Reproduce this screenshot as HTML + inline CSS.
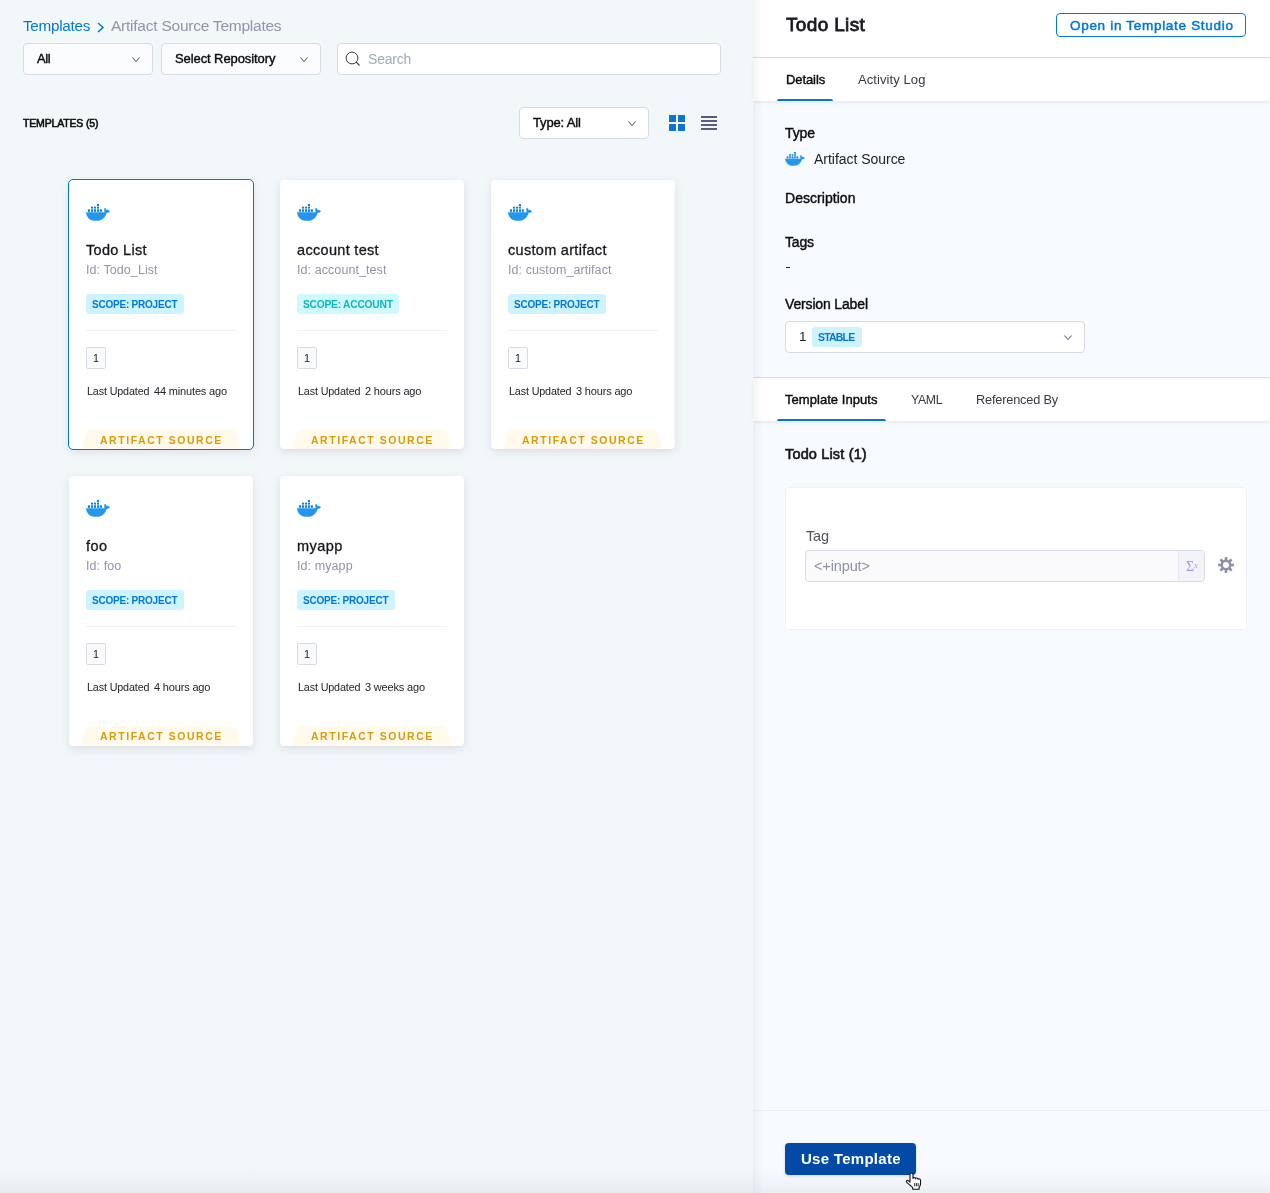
<!DOCTYPE html>
<html><head><meta charset="utf-8"><style>
*{box-sizing:border-box;margin:0;padding:0}
html,body{width:1270px;height:1193px;overflow:hidden}
body{font-family:"Liberation Sans",sans-serif;background:#F2F7FA;position:relative}
.abs{position:absolute}
.tx{position:absolute;white-space:nowrap;line-height:1;will-change:transform}
.box{position:absolute;border:1px solid #D9DAE5;border-radius:4px}
.card{position:absolute;width:184px;height:269px;background:#fff;border-radius:4px;box-shadow:0 0 1px rgba(40,41,61,.08),0 3px 8px rgba(96,97,112,.15)}
.card .clip{position:absolute;left:0;top:0;width:184px;height:100%;border-radius:4px;overflow:hidden}
.sel:after{content:"";position:absolute;left:-1px;top:-1px;right:-1px;bottom:-1px;border:1px solid #0278D5;border-radius:5px}
.tabs{position:absolute;left:0;width:517px;background:#fff;box-shadow:0 2px 3px rgba(40,41,61,.07)}
.uline{position:absolute;height:2px;background:#0278D5;border-radius:2px 2px 0 0}
</style></head>
<body>
<div class="abs" style="left:0;top:0;width:753px;height:1193px">
<div class="tx" style="left:23.30px;top:17.99px;font-size:15.25px;color:#0278D5;letter-spacing:-0.262px;">Templates</div>
<svg class="abs" style="left:96px;top:22px" width="10" height="11" viewBox="0 0 10 11"><path d="M2 1 L7 5.5 L2 10" fill="none" stroke="#0278D5" stroke-width="1.5"/></svg>
<div class="tx" style="left:110.80px;top:17.78px;font-size:15.5px;color:#9293AB;letter-spacing:-0.238px;">Artifact Source Templates</div>
<div class="box" style="left:23px;top:43px;width:130px;height:32px;background:#FBFCFE"></div>
<div class="tx" style="left:36.50px;top:51.99px;font-size:13.0px;color:#0B0B0D;-webkit-text-stroke:0.4px #0B0B0D;letter-spacing:-0.425px;">All</div>
<svg class="abs" style="left:130.6px;top:55.7px" width="10" height="7" viewBox="-1 -1 10 7"><path d="M0.5 0.5 L4.0 4.5 L7.5 0.5" fill="none" stroke="#6B6D85" stroke-width="1.1"/></svg>
<div class="box" style="left:161px;top:43px;width:160px;height:32px;background:#FBFCFE"></div>
<div class="tx" style="left:174.50px;top:51.99px;font-size:13.0px;color:#0B0B0D;-webkit-text-stroke:0.4px #0B0B0D;letter-spacing:-0.094px;">Select Repository</div>
<svg class="abs" style="left:299px;top:55.7px" width="10" height="7" viewBox="-1 -1 10 7"><path d="M0.5 0.5 L4.0 4.5 L7.5 0.5" fill="none" stroke="#6B6D85" stroke-width="1.1"/></svg>
<div class="box" style="left:337px;top:43px;width:384px;height:32px;background:#fff"></div>
<svg class="abs" style="left:345px;top:51px" width="16" height="16" viewBox="0 0 16 16"><circle cx="7" cy="7" r="5.9" fill="none" stroke="#383946" stroke-width="1"/><path d="M11.2 11.2 L14.5 14.5" stroke="#383946" stroke-width="1.1"/></svg>
<div class="tx" style="left:367.80px;top:52.15px;font-size:14.0px;color:#A0A9B8;letter-spacing:-0.190px;">Search</div>
<div class="tx" style="left:23.30px;top:118.31px;font-size:10.5px;color:#0B0B0D;-webkit-text-stroke:0.55px #0B0B0D;letter-spacing:-0.167px;">TEMPLATES (5)</div>
<div class="box" style="left:519px;top:107px;width:130px;height:32px;background:#fff"></div>
<div class="tx" style="left:533.00px;top:115.89px;font-size:13.0px;color:#0B0B0D;-webkit-text-stroke:0.4px #0B0B0D;letter-spacing:-0.156px;">Type: All</div>
<svg class="abs" style="left:627.1px;top:119.7px" width="10" height="7" viewBox="-1 -1 10 7"><path d="M0.5 0.5 L4.0 4.5 L7.5 0.5" fill="none" stroke="#6B6D85" stroke-width="1.1"/></svg>
<svg class="abs" style="left:668px;top:114px" width="18" height="18" viewBox="0 0 18 18" fill="#0F73D0">
<rect x="1" y="1" width="7" height="7"/><rect x="10" y="1" width="7" height="7"/><rect x="1" y="10" width="7" height="7"/><rect x="10" y="10" width="7" height="7"/></svg>
<svg class="abs" style="left:700px;top:114px" width="18" height="18" viewBox="0 0 18 18" fill="#5B5C76">
<rect x="1" y="2" width="16" height="2"/><rect x="1" y="6" width="16" height="2"/><rect x="1" y="10" width="16" height="2"/><rect x="1" y="14" width="16" height="2"/></svg>
<div class="card sel" style="left:69px;top:180px;height:269px"><div class="clip">
<svg class="abs" style="left:17px;top:24px" width="24" height="17" viewBox="0 0 24 17"><path fill="#2496ED" d="M0 8.3 L17.9 8.3 C18.6 8.1 18.6 7.3 18.3 6.4 C18.1 5.4 18.4 3.9 19 3.7 C19.7 3.9 20 4.7 20.2 5.7 C21.2 5.5 23.1 5.9 23.9 7.2 C23.4 8.3 22 8.9 20.6 8.9 C19.4 13.2 15.9 16.8 11.2 16.8 L8.2 16.8 C3.8 16.5 0.4 13 0 8.3 Z"/><g fill="#0A7FE3"><rect x="1.9" y="5.3" width="2.1" height="2.5"/><rect x="4.9" y="5.3" width="2.1" height="2.5"/><rect x="7.9" y="5.3" width="2.1" height="2.5"/><rect x="10.9" y="5.3" width="2.1" height="2.5"/><rect x="13.8" y="5.3" width="2.1" height="2.5"/><rect x="4.9" y="2.7" width="2.1" height="1.9"/><rect x="7.9" y="2.7" width="2.1" height="1.9"/><rect x="10.9" y="2.7" width="2.1" height="1.9"/><rect x="10.9" y="0" width="2.1" height="2.1"/></g></svg>
<div class="tx" style="left:17.00px;top:62.92px;font-size:14.5px;color:#16161C;-webkit-text-stroke:0.3px #16161C;letter-spacing:0.319px;">Todo List</div>
<div class="tx" style="left:17.00px;top:84.42px;font-size:12.5px;color:#9293AB;letter-spacing:0.076px;">Id: Todo_List</div>
<div class="abs" style="left:17px;top:114px;width:98px;height:19.5px;border-radius:3px;background:#CDF4FE"></div>
<div class="tx" style="left:23.30px;top:119.83px;font-size:10.0px;color:#0278D5;font-weight:bold;letter-spacing:-0.219px;">SCOPE: PROJECT</div>
<div class="abs" style="left:17px;top:150px;width:150px;height:1px;background:#EFEFF5"></div>
<div class="abs" style="left:17px;top:167px;width:20px;height:22px;border:1px solid #D9DAE5;border-radius:2px;background:#FAFBFD"></div>
<div class="tx" style="left:24.00px;top:172.70px;font-size:10.75px;color:#22222A;">1</div>
<div class="tx" style="left:17.50px;top:206.30px;font-size:10.75px;color:#22222A;letter-spacing:-0.132px;">Last Updated</div>
<div class="tx" style="left:85.10px;top:206.09px;font-size:11.0px;color:#22222A;letter-spacing:-0.162px;">44 minutes ago</div>
<svg class="abs" style="left:12px;top:249px" width="160" height="21" viewBox="0 0 160 21"><path d="M0 21 L4.3 5 Q5.6 0.3 10.5 0.3 L149.5 0.3 Q154.4 0.3 155.7 5 L160 21 Z" fill="#FFFAEC"/></svg>
<div class="tx" style="left:30.70px;top:254.91px;font-size:10.5px;color:#D99B0A;font-weight:bold;letter-spacing:1.539px;">ARTIFACT SOURCE</div>
</div></div>
<div class="card" style="left:280px;top:180px;height:269px"><div class="clip">
<svg class="abs" style="left:17px;top:24px" width="24" height="17" viewBox="0 0 24 17"><path fill="#2496ED" d="M0 8.3 L17.9 8.3 C18.6 8.1 18.6 7.3 18.3 6.4 C18.1 5.4 18.4 3.9 19 3.7 C19.7 3.9 20 4.7 20.2 5.7 C21.2 5.5 23.1 5.9 23.9 7.2 C23.4 8.3 22 8.9 20.6 8.9 C19.4 13.2 15.9 16.8 11.2 16.8 L8.2 16.8 C3.8 16.5 0.4 13 0 8.3 Z"/><g fill="#0A7FE3"><rect x="1.9" y="5.3" width="2.1" height="2.5"/><rect x="4.9" y="5.3" width="2.1" height="2.5"/><rect x="7.9" y="5.3" width="2.1" height="2.5"/><rect x="10.9" y="5.3" width="2.1" height="2.5"/><rect x="13.8" y="5.3" width="2.1" height="2.5"/><rect x="4.9" y="2.7" width="2.1" height="1.9"/><rect x="7.9" y="2.7" width="2.1" height="1.9"/><rect x="10.9" y="2.7" width="2.1" height="1.9"/><rect x="10.9" y="0" width="2.1" height="2.1"/></g></svg>
<div class="tx" style="left:17.00px;top:62.92px;font-size:14.5px;color:#16161C;-webkit-text-stroke:0.3px #16161C;letter-spacing:0.312px;">account test</div>
<div class="tx" style="left:17.00px;top:84.42px;font-size:12.5px;color:#9293AB;letter-spacing:0.076px;">Id: account_test</div>
<div class="abs" style="left:17px;top:114px;width:102px;height:19.5px;border-radius:3px;background:#CFF9FA"></div>
<div class="tx" style="left:23.10px;top:119.62px;font-size:10.25px;color:#0BB5C1;font-weight:bold;letter-spacing:-0.238px;">SCOPE: ACCOUNT</div>
<div class="abs" style="left:17px;top:150px;width:150px;height:1px;background:#EFEFF5"></div>
<div class="abs" style="left:17px;top:167px;width:20px;height:22px;border:1px solid #D9DAE5;border-radius:2px;background:#FAFBFD"></div>
<div class="tx" style="left:24.00px;top:172.70px;font-size:10.75px;color:#22222A;">1</div>
<div class="tx" style="left:17.50px;top:206.30px;font-size:10.75px;color:#22222A;letter-spacing:-0.132px;">Last Updated</div>
<div class="tx" style="left:85.10px;top:206.09px;font-size:11.0px;color:#22222A;letter-spacing:-0.167px;">2 hours ago</div>
<svg class="abs" style="left:12px;top:249px" width="160" height="21" viewBox="0 0 160 21"><path d="M0 21 L4.3 5 Q5.6 0.3 10.5 0.3 L149.5 0.3 Q154.4 0.3 155.7 5 L160 21 Z" fill="#FFFAEC"/></svg>
<div class="tx" style="left:30.70px;top:254.91px;font-size:10.5px;color:#D99B0A;font-weight:bold;letter-spacing:1.539px;">ARTIFACT SOURCE</div>
</div></div>
<div class="card" style="left:491px;top:180px;height:269px"><div class="clip">
<svg class="abs" style="left:17px;top:24px" width="24" height="17" viewBox="0 0 24 17"><path fill="#2496ED" d="M0 8.3 L17.9 8.3 C18.6 8.1 18.6 7.3 18.3 6.4 C18.1 5.4 18.4 3.9 19 3.7 C19.7 3.9 20 4.7 20.2 5.7 C21.2 5.5 23.1 5.9 23.9 7.2 C23.4 8.3 22 8.9 20.6 8.9 C19.4 13.2 15.9 16.8 11.2 16.8 L8.2 16.8 C3.8 16.5 0.4 13 0 8.3 Z"/><g fill="#0A7FE3"><rect x="1.9" y="5.3" width="2.1" height="2.5"/><rect x="4.9" y="5.3" width="2.1" height="2.5"/><rect x="7.9" y="5.3" width="2.1" height="2.5"/><rect x="10.9" y="5.3" width="2.1" height="2.5"/><rect x="13.8" y="5.3" width="2.1" height="2.5"/><rect x="4.9" y="2.7" width="2.1" height="1.9"/><rect x="7.9" y="2.7" width="2.1" height="1.9"/><rect x="10.9" y="2.7" width="2.1" height="1.9"/><rect x="10.9" y="0" width="2.1" height="2.1"/></g></svg>
<div class="tx" style="left:17.00px;top:62.92px;font-size:14.5px;color:#16161C;-webkit-text-stroke:0.3px #16161C;letter-spacing:0.296px;">custom artifact</div>
<div class="tx" style="left:17.00px;top:84.42px;font-size:12.5px;color:#9293AB;letter-spacing:0.073px;">Id: custom_artifact</div>
<div class="abs" style="left:17px;top:114px;width:98px;height:19.5px;border-radius:3px;background:#CDF4FE"></div>
<div class="tx" style="left:23.30px;top:119.83px;font-size:10.0px;color:#0278D5;font-weight:bold;letter-spacing:-0.219px;">SCOPE: PROJECT</div>
<div class="abs" style="left:17px;top:150px;width:150px;height:1px;background:#EFEFF5"></div>
<div class="abs" style="left:17px;top:167px;width:20px;height:22px;border:1px solid #D9DAE5;border-radius:2px;background:#FAFBFD"></div>
<div class="tx" style="left:24.00px;top:172.70px;font-size:10.75px;color:#22222A;">1</div>
<div class="tx" style="left:17.50px;top:206.30px;font-size:10.75px;color:#22222A;letter-spacing:-0.132px;">Last Updated</div>
<div class="tx" style="left:85.10px;top:206.09px;font-size:11.0px;color:#22222A;letter-spacing:-0.167px;">3 hours ago</div>
<svg class="abs" style="left:12px;top:249px" width="160" height="21" viewBox="0 0 160 21"><path d="M0 21 L4.3 5 Q5.6 0.3 10.5 0.3 L149.5 0.3 Q154.4 0.3 155.7 5 L160 21 Z" fill="#FFFAEC"/></svg>
<div class="tx" style="left:30.70px;top:254.91px;font-size:10.5px;color:#D99B0A;font-weight:bold;letter-spacing:1.539px;">ARTIFACT SOURCE</div>
</div></div>
<div class="card" style="left:69px;top:476px;height:270px"><div class="clip">
<svg class="abs" style="left:17px;top:24px" width="24" height="17" viewBox="0 0 24 17"><path fill="#2496ED" d="M0 8.3 L17.9 8.3 C18.6 8.1 18.6 7.3 18.3 6.4 C18.1 5.4 18.4 3.9 19 3.7 C19.7 3.9 20 4.7 20.2 5.7 C21.2 5.5 23.1 5.9 23.9 7.2 C23.4 8.3 22 8.9 20.6 8.9 C19.4 13.2 15.9 16.8 11.2 16.8 L8.2 16.8 C3.8 16.5 0.4 13 0 8.3 Z"/><g fill="#0A7FE3"><rect x="1.9" y="5.3" width="2.1" height="2.5"/><rect x="4.9" y="5.3" width="2.1" height="2.5"/><rect x="7.9" y="5.3" width="2.1" height="2.5"/><rect x="10.9" y="5.3" width="2.1" height="2.5"/><rect x="13.8" y="5.3" width="2.1" height="2.5"/><rect x="4.9" y="2.7" width="2.1" height="1.9"/><rect x="7.9" y="2.7" width="2.1" height="1.9"/><rect x="10.9" y="2.7" width="2.1" height="1.9"/><rect x="10.9" y="0" width="2.1" height="2.1"/></g></svg>
<div class="tx" style="left:17.00px;top:62.92px;font-size:14.5px;color:#16161C;-webkit-text-stroke:0.3px #16161C;letter-spacing:0.443px;">foo</div>
<div class="tx" style="left:17.00px;top:84.42px;font-size:12.5px;color:#9293AB;letter-spacing:0.074px;">Id: foo</div>
<div class="abs" style="left:17px;top:114px;width:98px;height:19.5px;border-radius:3px;background:#CDF4FE"></div>
<div class="tx" style="left:23.30px;top:119.83px;font-size:10.0px;color:#0278D5;font-weight:bold;letter-spacing:-0.219px;">SCOPE: PROJECT</div>
<div class="abs" style="left:17px;top:150px;width:150px;height:1px;background:#EFEFF5"></div>
<div class="abs" style="left:17px;top:167px;width:20px;height:22px;border:1px solid #D9DAE5;border-radius:2px;background:#FAFBFD"></div>
<div class="tx" style="left:24.00px;top:172.70px;font-size:10.75px;color:#22222A;">1</div>
<div class="tx" style="left:17.50px;top:206.30px;font-size:10.75px;color:#22222A;letter-spacing:-0.132px;">Last Updated</div>
<div class="tx" style="left:85.10px;top:206.09px;font-size:11.0px;color:#22222A;letter-spacing:-0.167px;">4 hours ago</div>
<svg class="abs" style="left:12px;top:250px" width="160" height="21" viewBox="0 0 160 21"><path d="M0 21 L4.3 5 Q5.6 0.3 10.5 0.3 L149.5 0.3 Q154.4 0.3 155.7 5 L160 21 Z" fill="#FFFAEC"/></svg>
<div class="tx" style="left:30.70px;top:254.91px;font-size:10.5px;color:#D99B0A;font-weight:bold;letter-spacing:1.539px;">ARTIFACT SOURCE</div>
</div></div>
<div class="card" style="left:280px;top:476px;height:270px"><div class="clip">
<svg class="abs" style="left:17px;top:24px" width="24" height="17" viewBox="0 0 24 17"><path fill="#2496ED" d="M0 8.3 L17.9 8.3 C18.6 8.1 18.6 7.3 18.3 6.4 C18.1 5.4 18.4 3.9 19 3.7 C19.7 3.9 20 4.7 20.2 5.7 C21.2 5.5 23.1 5.9 23.9 7.2 C23.4 8.3 22 8.9 20.6 8.9 C19.4 13.2 15.9 16.8 11.2 16.8 L8.2 16.8 C3.8 16.5 0.4 13 0 8.3 Z"/><g fill="#0A7FE3"><rect x="1.9" y="5.3" width="2.1" height="2.5"/><rect x="4.9" y="5.3" width="2.1" height="2.5"/><rect x="7.9" y="5.3" width="2.1" height="2.5"/><rect x="10.9" y="5.3" width="2.1" height="2.5"/><rect x="13.8" y="5.3" width="2.1" height="2.5"/><rect x="4.9" y="2.7" width="2.1" height="1.9"/><rect x="7.9" y="2.7" width="2.1" height="1.9"/><rect x="10.9" y="2.7" width="2.1" height="1.9"/><rect x="10.9" y="0" width="2.1" height="2.1"/></g></svg>
<div class="tx" style="left:17.00px;top:62.92px;font-size:14.5px;color:#16161C;-webkit-text-stroke:0.3px #16161C;letter-spacing:0.478px;">myapp</div>
<div class="tx" style="left:17.00px;top:84.42px;font-size:12.5px;color:#9293AB;letter-spacing:0.088px;">Id: myapp</div>
<div class="abs" style="left:17px;top:114px;width:98px;height:19.5px;border-radius:3px;background:#CDF4FE"></div>
<div class="tx" style="left:23.30px;top:119.83px;font-size:10.0px;color:#0278D5;font-weight:bold;letter-spacing:-0.219px;">SCOPE: PROJECT</div>
<div class="abs" style="left:17px;top:150px;width:150px;height:1px;background:#EFEFF5"></div>
<div class="abs" style="left:17px;top:167px;width:20px;height:22px;border:1px solid #D9DAE5;border-radius:2px;background:#FAFBFD"></div>
<div class="tx" style="left:24.00px;top:172.70px;font-size:10.75px;color:#22222A;">1</div>
<div class="tx" style="left:17.50px;top:206.30px;font-size:10.75px;color:#22222A;letter-spacing:-0.132px;">Last Updated</div>
<div class="tx" style="left:85.10px;top:206.09px;font-size:11.0px;color:#22222A;letter-spacing:-0.176px;">3 weeks ago</div>
<svg class="abs" style="left:12px;top:250px" width="160" height="21" viewBox="0 0 160 21"><path d="M0 21 L4.3 5 Q5.6 0.3 10.5 0.3 L149.5 0.3 Q154.4 0.3 155.7 5 L160 21 Z" fill="#FFFAEC"/></svg>
<div class="tx" style="left:30.70px;top:254.91px;font-size:10.5px;color:#D99B0A;font-weight:bold;letter-spacing:1.539px;">ARTIFACT SOURCE</div>
</div></div>
</div>
<div class="abs" style="left:753px;top:0;width:517px;height:1193px;background:#F7FBFF">
<div class="abs" style="left:0;top:0;width:517px;height:58px;background:#fff;border-bottom:1px solid #D9DAE5"></div>
<div class="tx" style="left:32.90px;top:14.91px;font-size:19px;color:#1A1A21;-webkit-text-stroke:0.8px #1A1A21;letter-spacing:0.344px;">Todo List</div>
<div class="abs" style="left:303px;top:13px;width:190px;height:24px;border:1px solid #0278D5;border-radius:4px"></div>
<div class="tx" style="left:316.50px;top:19.17px;font-size:13.5px;color:#0278D5;-webkit-text-stroke:0.5px #0278D5;letter-spacing:0.695px;">Open in Template Studio</div>
<div class="tabs" style="top:58px;height:43px"></div>
<div class="tx" style="left:32.60px;top:73.29px;font-size:13px;color:#0B0B0D;-webkit-text-stroke:0.4px #0B0B0D;letter-spacing:-0.092px;">Details</div>
<div class="tx" style="left:104.60px;top:73.29px;font-size:13px;color:#383946;letter-spacing:0.086px;">Activity Log</div>
<div class="uline" style="left:24px;top:99px;width:56px"></div>
<div class="tx" style="left:32.20px;top:126.45px;font-size:14px;color:#0B0B0D;-webkit-text-stroke:0.4px #0B0B0D;letter-spacing:-0.117px;">Type</div>
<svg class="abs" style="left:32px;top:152px" width="20" height="14" viewBox="0 0 24 17"><path fill="#2496ED" d="M0 8.3 L17.9 8.3 C18.6 8.1 18.6 7.3 18.3 6.4 C18.1 5.4 18.4 3.9 19 3.7 C19.7 3.9 20 4.7 20.2 5.7 C21.2 5.5 23.1 5.9 23.9 7.2 C23.4 8.3 22 8.9 20.6 8.9 C19.4 13.2 15.9 16.8 11.2 16.8 L8.2 16.8 C3.8 16.5 0.4 13 0 8.3 Z"/><g fill="#0A7FE3"><rect x="1.9" y="5.3" width="2.1" height="2.5"/><rect x="4.9" y="5.3" width="2.1" height="2.5"/><rect x="7.9" y="5.3" width="2.1" height="2.5"/><rect x="10.9" y="5.3" width="2.1" height="2.5"/><rect x="13.8" y="5.3" width="2.1" height="2.5"/><rect x="4.9" y="2.7" width="2.1" height="1.9"/><rect x="7.9" y="2.7" width="2.1" height="1.9"/><rect x="10.9" y="2.7" width="2.1" height="1.9"/><rect x="10.9" y="0" width="2.1" height="2.1"/></g></svg>
<div class="tx" style="left:60.50px;top:152.45px;font-size:14px;color:#22222A;letter-spacing:-0.029px;">Artifact Source</div>
<div class="tx" style="left:32.20px;top:191.35px;font-size:14px;color:#0B0B0D;-webkit-text-stroke:0.4px #0B0B0D;letter-spacing:0.045px;">Description</div>
<div class="tx" style="left:32.20px;top:235.45px;font-size:14px;color:#0B0B0D;-webkit-text-stroke:0.4px #0B0B0D;letter-spacing:-0.183px;">Tags</div>
<div class="abs" style="left:33px;top:267px;width:4px;height:1.3px;background:#22222A"></div>
<div class="tx" style="left:32.40px;top:297.05px;font-size:14px;color:#0B0B0D;-webkit-text-stroke:0.4px #0B0B0D;letter-spacing:-0.154px;">Version Label</div>
<div class="box" style="left:32px;top:321px;width:300px;height:32px;background:#fff"></div>
<div class="tx" style="left:45.50px;top:330.37px;font-size:13.5px;color:#22222A;">1</div>
<div class="abs" style="left:59px;top:327px;width:50px;height:20px;border-radius:3px;background:#CDF4FE"></div>
<div class="tx" style="left:65.30px;top:332.01px;font-size:10.5px;color:#0278D5;font-weight:bold;letter-spacing:-0.800px;">STABLE</div>
<svg class="abs" style="left:310px;top:334px" width="10" height="7" viewBox="-1 -1 10 7"><path d="M0.5 0.5 L4.0 4.5 L7.5 0.5" fill="none" stroke="#6B6D85" stroke-width="1.1"/></svg>
<div class="abs" style="left:0;top:377px;width:517px;height:1px;background:#D9DAE5"></div>
<div class="tabs" style="top:378px;height:43px"></div>
<div class="tx" style="left:32.40px;top:393.49px;font-size:13px;color:#0B0B0D;-webkit-text-stroke:0.4px #0B0B0D;letter-spacing:0.046px;">Template Inputs</div>
<div class="tx" style="left:158.30px;top:394.13px;font-size:12.25px;color:#383946;letter-spacing:-0.283px;">YAML</div>
<div class="tx" style="left:223.30px;top:393.70px;font-size:12.75px;color:#383946;letter-spacing:-0.179px;">Referenced By</div>
<div class="uline" style="left:24px;top:419px;width:109px"></div>
<div class="tx" style="left:32.40px;top:446.52px;font-size:14.5px;color:#16161C;-webkit-text-stroke:0.65px #16161C;letter-spacing:0.158px;">Todo List (1)</div>
<div class="abs" style="left:32px;top:487px;width:462px;height:142.5px;background:#fff;border:1px solid #F0F1F6;border-radius:4px"></div>
<div class="tx" style="left:52.60px;top:528.62px;font-size:14.5px;color:#4F5162;letter-spacing:-0.150px;">Tag</div>
<div class="box" style="left:52px;top:550px;width:400px;height:32px;background:#FAFAFD;overflow:hidden"><div class="abs" style="left:372px;top:0;width:27px;height:30px;background:#F3F3FA;border-left:1px solid #E6E7EF"></div></div>
<div class="tx" style="left:61.40px;top:558.62px;font-size:14.5px;color:#8F90AA;letter-spacing:-0.121px;">&lt;+input&gt;</div>
<div class="tx" style="left:432.5px;top:559.5px;font-family:'Liberation Serif',serif;font-size:14px;color:#B08FE9">&Sigma;<span style="font-size:8px;font-style:italic;vertical-align:3px">x</span></div>
<svg class="abs" style="left:463.9px;top:555.8px" width="18" height="18" viewBox="0 0 18 18"><g fill="#8D8EA8"><rect x="7.7" y="1.1" width="2.6" height="4" transform="rotate(0 9 9)"/><rect x="7.7" y="1.1" width="2.6" height="4" transform="rotate(45 9 9)"/><rect x="7.7" y="1.1" width="2.6" height="4" transform="rotate(90 9 9)"/><rect x="7.7" y="1.1" width="2.6" height="4" transform="rotate(135 9 9)"/><rect x="7.7" y="1.1" width="2.6" height="4" transform="rotate(180 9 9)"/><rect x="7.7" y="1.1" width="2.6" height="4" transform="rotate(225 9 9)"/><rect x="7.7" y="1.1" width="2.6" height="4" transform="rotate(270 9 9)"/><rect x="7.7" y="1.1" width="2.6" height="4" transform="rotate(315 9 9)"/><circle cx="9" cy="9" r="5.4"/></g><circle cx="9" cy="9" r="3" fill="#fff"/></svg>
<div class="abs" style="left:0;top:1110px;width:517px;height:1px;background:#EDEEF3"></div>
<div class="abs" style="left:32px;top:1143px;width:131px;height:32px;border-radius:4px;background:#034AA6;box-shadow:0 1px 3px rgba(0,0,0,.15)"></div>
<div class="tx" style="left:48.00px;top:1151.20px;font-size:15px;color:#fff;font-weight:bold;letter-spacing:0.282px;">Use Template</div>
</div>
<div class="abs" style="left:753px;top:0;width:11px;height:1193px;background:linear-gradient(to right,rgba(30,40,70,.055) 0,rgba(30,40,70,.04) 2px,rgba(30,40,70,0) 10px)"></div>
<div class="abs" style="left:0;top:1168px;width:1270px;height:25px;background:linear-gradient(to bottom,rgba(20,40,60,0) 0,rgba(20,40,60,.02) 40%,rgba(20,40,60,.06) 100%)"></div>
<svg class="abs" style="left:904.5px;top:1172px" width="18" height="19" viewBox="-0.5 -0.5 18 19"><path d="M4.5 2 Q4.5 0.5 6 0.5 Q7.5 0.5 7.5 2 L7.5 6 Q7.5 5 8.75 5 Q10 5 10 6.2 Q10 5.5 11.25 5.5 Q12.5 5.5 12.5 6.7 Q12.6 6.3 13.7 6.3 Q15 6.5 15 7.8 L15 11.5 Q15 13.2 13.6 14.8 L13.6 16.8 L7.2 16.8 L7.2 15.2 Q5 13 1.3 9.8 Q0.6 9 1.1 8.3 Q1.8 7.6 2.8 8.2 L4.5 9.6 Z" fill="#fff" stroke="#111" stroke-width="1.1" stroke-linejoin="round"/><path d="M9.2 10.6 V13.8 M10.9 10.6 V13.8 M12.6 10.6 V13.8" stroke="#111" stroke-width="0.9"/></svg>
</body></html>
